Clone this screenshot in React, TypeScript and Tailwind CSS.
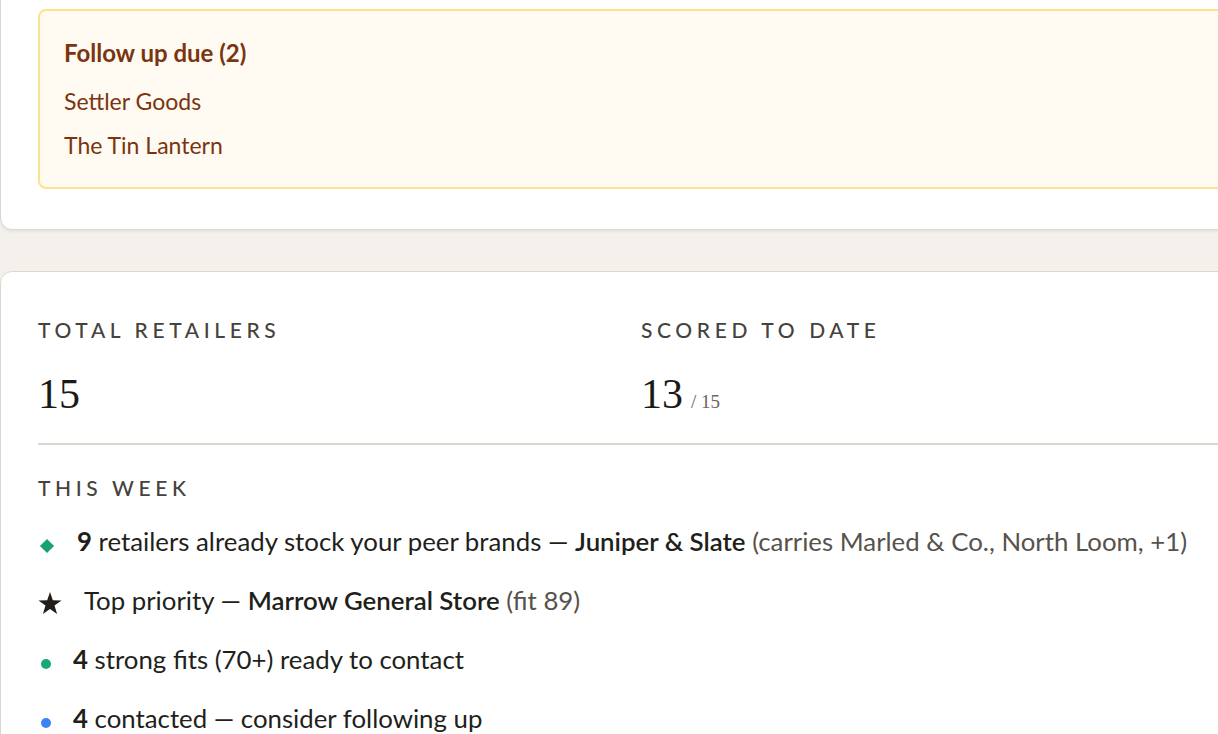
const sans = "font-['Lato','Open_Sans',sans-serif]";

function StarIcon() {
  return (
    <svg width="24" height="23" viewBox="0 0 24 23" className="mr-[22px] mt-[5px] shrink-0">
      <polygon
        points="12,0 14.8,8.3 23.5,8.4 16.5,13.6 19.1,22 12,17 4.9,22 7.5,13.6 0.5,8.4 9.2,8.3"
        fill="#221f1b"
      />
    </svg>
  );
}

export default function App() {
  return (
    <div className={`min-h-screen w-full overflow-hidden bg-[#f4f1ec] ${sans}`}>
      <div className="w-[1300px] -mt-[30px]">
        {/* follow up card */}
        <section className="rounded-xl border border-[#dcd6ce] bg-white px-[37px] pt-[38px] pb-[40px] shadow-[0_2px_3px_rgba(0,0,0,0.06)]">
          <div className="rounded-lg border-2 border-[#fbe38e] bg-[#fffbf2] pl-[24px] pt-[28px] pb-[28px]">
            <h3 className="text-[24px] leading-7 font-bold text-[#7a3510]">Follow up due (2)</h3>
            <ul className="mt-[20px] flex flex-col gap-[16px] text-[23px] leading-7 text-[#7a3510]">
              <li>Settler Goods</li>
              <li>The Tin Lantern</li>
            </ul>
          </div>
        </section>

        {/* summary card */}
        <section className="mt-[41px] rounded-xl border border-[#dcd6ce] bg-white px-[37px] pt-[44px] pb-10">
          <div className="grid grid-cols-[603px_603px_1fr]">
            <div>
              <div className="text-[21px] leading-7 font-medium uppercase tracking-[0.22em] text-[#46423d]">Total retailers</div>
              <div className="mt-[26px] font-['Liberation_Serif',serif] text-[42px] leading-[48px] text-[#1c1a17]">15</div>
            </div>
            <div>
              <div className="text-[21px] leading-7 font-medium uppercase tracking-[0.22em] text-[#46423d]">Scored to date</div>
              <div className="mt-[26px] flex items-baseline gap-2 font-['Liberation_Serif',serif]">
                <span className="text-[42px] leading-[48px] text-[#1c1a17]">13</span>
                <span className="text-[19px] text-[#6b655d]">/ 15</span>
              </div>
            </div>
          </div>

          <div className="mt-[25px] border-t-2 border-[#dcd6ce]" />

          <div className="mt-[29px] text-[21px] leading-7 font-medium uppercase tracking-[0.22em] text-[#46423d]">This week</div>

          <ul className="mt-[24px] flex flex-col gap-[28px] text-[25.8px] leading-[31px] text-[#221f1b]">
            <li className="flex items-center">
              <span className="ml-[4px] mr-[25px] mt-[8px] h-[10px] w-[10px] shrink-0 rotate-45 bg-[#16a36f]" />
              <span className="whitespace-nowrap">
                <b>9</b> retailers already stock your peer brands — <span className="font-semibold">Juniper &amp; Slate</span>{' '}
                <span className="text-[#57524b]">(carries Marled &amp; Co., North Loom, +1)</span>
              </span>
            </li>
            <li className="flex items-center">
              <StarIcon />
              <span className="whitespace-nowrap">
                Top priority — <span className="font-semibold">Marrow General Store</span>{' '}
                <span className="text-[#57524b]">(fit 89)</span>
              </span>
            </li>
            <li className="flex items-center">
              <span className="ml-[3px] mr-[22px] mt-[8px] h-[10px] w-[10px] shrink-0 rounded-full bg-[#16a87a]" />
              <span className="whitespace-nowrap">
                <b>4</b> strong fits (70+) ready to contact
              </span>
            </li>
            <li className="flex items-center">
              <span className="ml-[3px] mr-[22px] mt-[8px] h-[10px] w-[10px] shrink-0 rounded-full bg-[#3b82f6]" />
              <span className="whitespace-nowrap">
                <b>4</b> contacted — consider following up
              </span>
            </li>
          </ul>
        </section>
      </div>
    </div>
  );
}
